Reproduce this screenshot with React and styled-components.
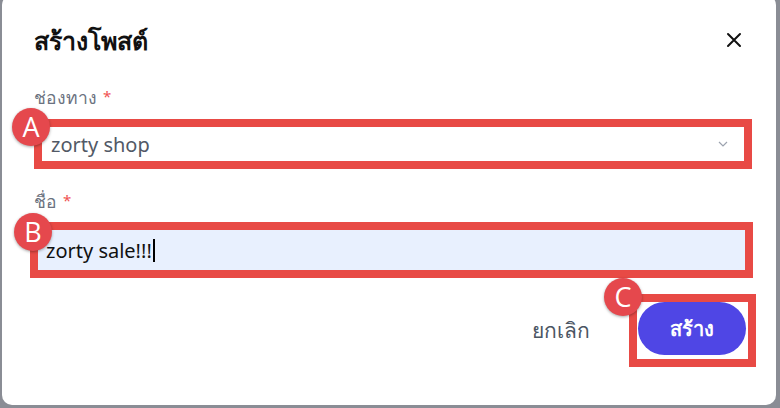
import styled, { createGlobalStyle } from "styled-components";

const GlobalStyle = createGlobalStyle`
  html, body { margin: 0; padding: 0; }
  body {
    background: #8a8d95;
    font-family: "Noto Sans", "Open Sans", sans-serif;
    overflow: hidden;
  }
`;

const Card = styled.div`
  box-sizing: border-box;
  margin: -5px 4px 0 2px;
  height: 410px;
  background: #fff;
  border-radius: 10px;
  padding: 30px 32px 0 32px;
  display: flex;
  flex-direction: column;
`;

const Header = styled.div`
  display: flex;
  justify-content: space-between;
  align-items: center;
  height: 30px;
`;

const Title = styled.h2`
  margin: 0;
  font-size: 25px;
  line-height: 30px;
  font-weight: 700;
  color: #111;
`;

const Close = styled.button`
  border: 0;
  background: none;
  padding: 0;
  margin-right: -2px;
  width: 24px;
  height: 24px;
  display: flex;
  align-items: center;
  justify-content: center;
  cursor: pointer;
`;

const Label = styled.div`
  margin-top: ${(p) => p.$top}px;
  height: 24px;
  font-size: 17.5px;
  line-height: 24px;
  color: #6b7280;
  span {
    color: #f05252;
    margin-left: 6px;
    font-size: 15px;
    line-height: 1;
    font-weight: 400;
    position: relative;
    top: -2px;
  }
`;

const Highlight = styled.div`
  position: relative;
  box-sizing: border-box;
  border: 8px solid #e84a45;
  margin-top: ${(p) => p.$top}px;
  margin-left: ${(p) => p.$left}px;
  margin-right: ${(p) => p.$right}px;
  height: ${(p) => p.$h}px;
`;

const Badge = styled.div`
  position: absolute;
  left: ${(p) => p.$x}px;
  top: ${(p) => p.$y}px;
  width: 38px;
  height: 38px;
  border-radius: 50%;
  background: #e5484d;
  color: #fff;
  font-family: "Open Sans", "Liberation Sans", sans-serif;
  font-size: 27px;
  line-height: 38px;
  text-align: center;
  box-shadow: 0 1px 3px rgba(0, 0, 0, 0.35);
  z-index: 2;
`;

const SelectBox = styled.div`
  height: 100%;
  display: flex;
  align-items: center;
  justify-content: space-between;
  padding: 0 16px 0 9px;
  font-size: 20px;
  color: #525966;
  background: #fff;
`;

const InputBox = styled.div`
  height: 100%;
  display: flex;
  align-items: center;
  padding-left: 8px;
  font-size: 20px;
  color: #111;
  background: #e8f0fe;
`;

const Caret = styled.i`
  display: inline-block;
  width: 2px;
  height: 23px;
  background: #000;
  margin-left: 1px;
`;

const Footer = styled.div`
  display: flex;
  justify-content: flex-end;
  align-items: center;
  gap: 39px;
  margin-top: 16px;
  margin-right: -12px;
`;

const Cancel = styled.button`
  border: 0;
  background: none;
  padding: 0;
  font-family: inherit;
  font-size: 21px;
  font-weight: 500;
  color: #4b5563;
  cursor: pointer;
`;

const Primary = styled.button`
  width: 108px;
  height: 53px;
  margin: 0 2px 0 1px;
  border: 0;
  border-radius: 27px;
  background: #4f46e5;
  color: #fff;
  font-family: inherit;
  font-size: 20px;
  font-weight: 700;
  cursor: pointer;
`;

export default function App() {
  return (
    <>
      <GlobalStyle />
      <Card>
        <Header>
          <Title>สร้างโพสต์</Title>
          <Close>
            <svg width="24" height="24" viewBox="0 0 24 24" fill="none" stroke="#111" strokeWidth="2" strokeLinecap="round">
              <path d="M18 6 6 18M6 6l12 12" />
            </svg>
          </Close>
        </Header>

        <Label $top={30}>ช่องทาง<span>*</span></Label>
        <Highlight $top={10} $left={0} $right={-8} $h={50}>
          <Badge $x={-30} $y={-19}>A</Badge>
          <SelectBox>
            zorty shop
            <svg width="10" height="6" viewBox="0 0 10 6" fill="none" stroke="#9ca3af" strokeWidth="1.2">
              <path d="M1 1l4 4 4-4" />
            </svg>
          </SelectBox>
        </Highlight>

        <Label $top={20}>ชื่อ<span>*</span></Label>
        <Highlight $top={9} $left={-4} $right={-9} $h={56}>
          <Badge $x={-24} $y={-17}>B</Badge>
          <InputBox>zorty sale!!!<Caret /></InputBox>
        </Highlight>

        <Footer>
          <Cancel>ยกเลิก</Cancel>
          <Highlight $top={0} $left={0} $right={0} $h={73}>
            <Badge $x={-33} $y={-24}>C</Badge>
            <Primary>สร้าง</Primary>
          </Highlight>
        </Footer>
      </Card>
    </>
  );
}
